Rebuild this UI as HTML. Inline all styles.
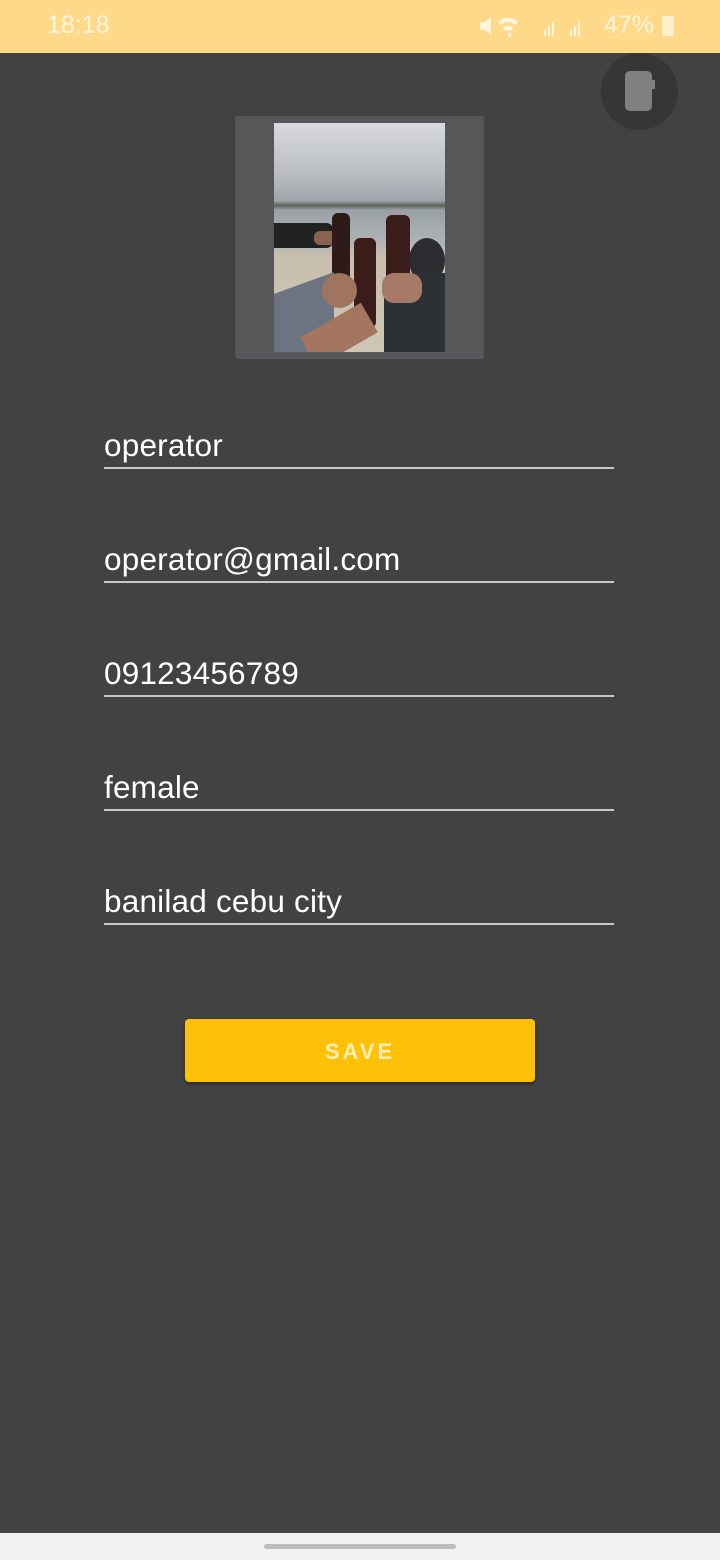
<!DOCTYPE html>
<html><head><style>
body{margin:0;width:720px;height:1560px;background:#424242;font-family:"Liberation Sans",Roboto,sans-serif;position:relative;overflow:hidden}
.sb{position:absolute;left:0;top:0;width:720px;height:53px;background:#FFD98A;color:#fff5dc}
.f{position:absolute;left:104px;width:510px;border-bottom:2px solid #c8c8c8;color:#fff;font-size:31.5px;height:42px;line-height:40px;letter-spacing:0.2px}
</style></head><body>
<div class="sb">
<div style="position:absolute;left:47px;top:11px;font-size:25px">18:18</div>
<div style="position:absolute;left:604px;top:11px;font-size:25px">47%</div>
<div style="position:absolute;left:662px;top:16px;width:12px;height:20px;background:#fff5dc;border-radius:2px;opacity:.8"></div>
<svg style="position:absolute;left:478px;top:14px" width="115" height="24"><g fill="#fff5dc"><path d="M2 8h5l6-5v18l-6-5H2z"/><path d="M20 8 A14 14 0 0 1 40 8 L37 11 A10 10 0 0 0 23 11Z M25 14 A7 7 0 0 1 35 14 L32 17 A3 3 0 0 0 28 17Z"/><rect x="30" y="19" width="3" height="4"/><rect x="66" y="16" width="2" height="6"/><rect x="70" y="12" width="2" height="10"/><rect x="74" y="8" width="2" height="14"/><rect x="92" y="16" width="2" height="6"/><rect x="96" y="12" width="2" height="10"/><rect x="100" y="8" width="2" height="14"/></g></svg>
</div>
<div style="position:absolute;left:601px;top:53px;width:77px;height:77px;border-radius:50%;background:#363636"></div>
<div style="position:absolute;left:625px;top:71px;width:27px;height:40px;border-radius:5px;background:#808080"></div>
<div style="position:absolute;left:652px;top:80px;width:3px;height:9px;background:#808080"></div>
<div style="position:absolute;left:235px;top:116px;width:249px;height:243px;background:#575759;border-radius:3px"></div>
<div style="position:absolute;left:274px;top:123px;width:171px;height:229px;overflow:hidden;background:linear-gradient(#d8dadc 0%,#b5b9be 25%,#9ea4ab 34%,#5c6158 36%,#9aa1a6 38%,#aeb3b5 52%,#c9bfae 58%,#cfc5b3 100%)">
<div style="position:absolute;left:0;top:100px;width:60px;height:25px;background:#222;border-radius:0 8px 8px 0"></div>
<div style="position:absolute;left:40px;top:108px;width:30px;height:14px;background:#8a6250;border-radius:6px"></div>
<div style="position:absolute;left:58px;top:90px;width:18px;height:66px;background:#2e1a17;border-radius:6px 6px 3px 3px"></div>
<div style="position:absolute;left:80px;top:115px;width:22px;height:90px;background:#3a1c1a;border-radius:6px"></div>
<div style="position:absolute;left:112px;top:92px;width:24px;height:90px;background:#3a1c1a;border-radius:6px"></div>
<div style="position:absolute;left:135px;top:115px;width:36px;height:45px;background:#2a2c30;border-radius:50%"></div>
<div style="position:absolute;left:0;top:160px;width:60px;height:70px;background:#6b7480;transform:skewY(-20deg)"></div>
<div style="position:absolute;left:48px;top:150px;width:35px;height:35px;background:#a07560;border-radius:50%"></div>
<div style="position:absolute;left:110px;top:150px;width:61px;height:79px;background:#2d3035;border-radius:20px 0 0 0"></div>
<div style="position:absolute;left:108px;top:150px;width:40px;height:30px;background:#a67a66;border-radius:12px"></div>
<div style="position:absolute;left:30px;top:195px;width:70px;height:34px;background:#a4765f;transform:rotate(-30deg)"></div>
</div>
<div class="f" style="top:425px">operator</div>
<div class="f" style="top:539px">operator@gmail.com</div>
<div class="f" style="top:653px">09123456789</div>
<div class="f" style="top:767px">female</div>
<div class="f" style="top:881px">banilad cebu city</div>
<div style="position:absolute;left:185px;top:1019px;width:350px;height:63px;background:#FFC107;border-radius:4px;box-shadow:0 2px 3px rgba(0,0,0,.35);color:#FFF0B8;font-size:22px;font-weight:bold;letter-spacing:3px;text-align:center;line-height:65px">SAVE</div>
<div style="position:absolute;left:0;top:1533px;width:720px;height:27px;background:#f2f2f2"></div>
<div style="position:absolute;left:264px;top:1544px;width:192px;height:5px;border-radius:3px;background:#bdbdbd"></div>
</body></html>
